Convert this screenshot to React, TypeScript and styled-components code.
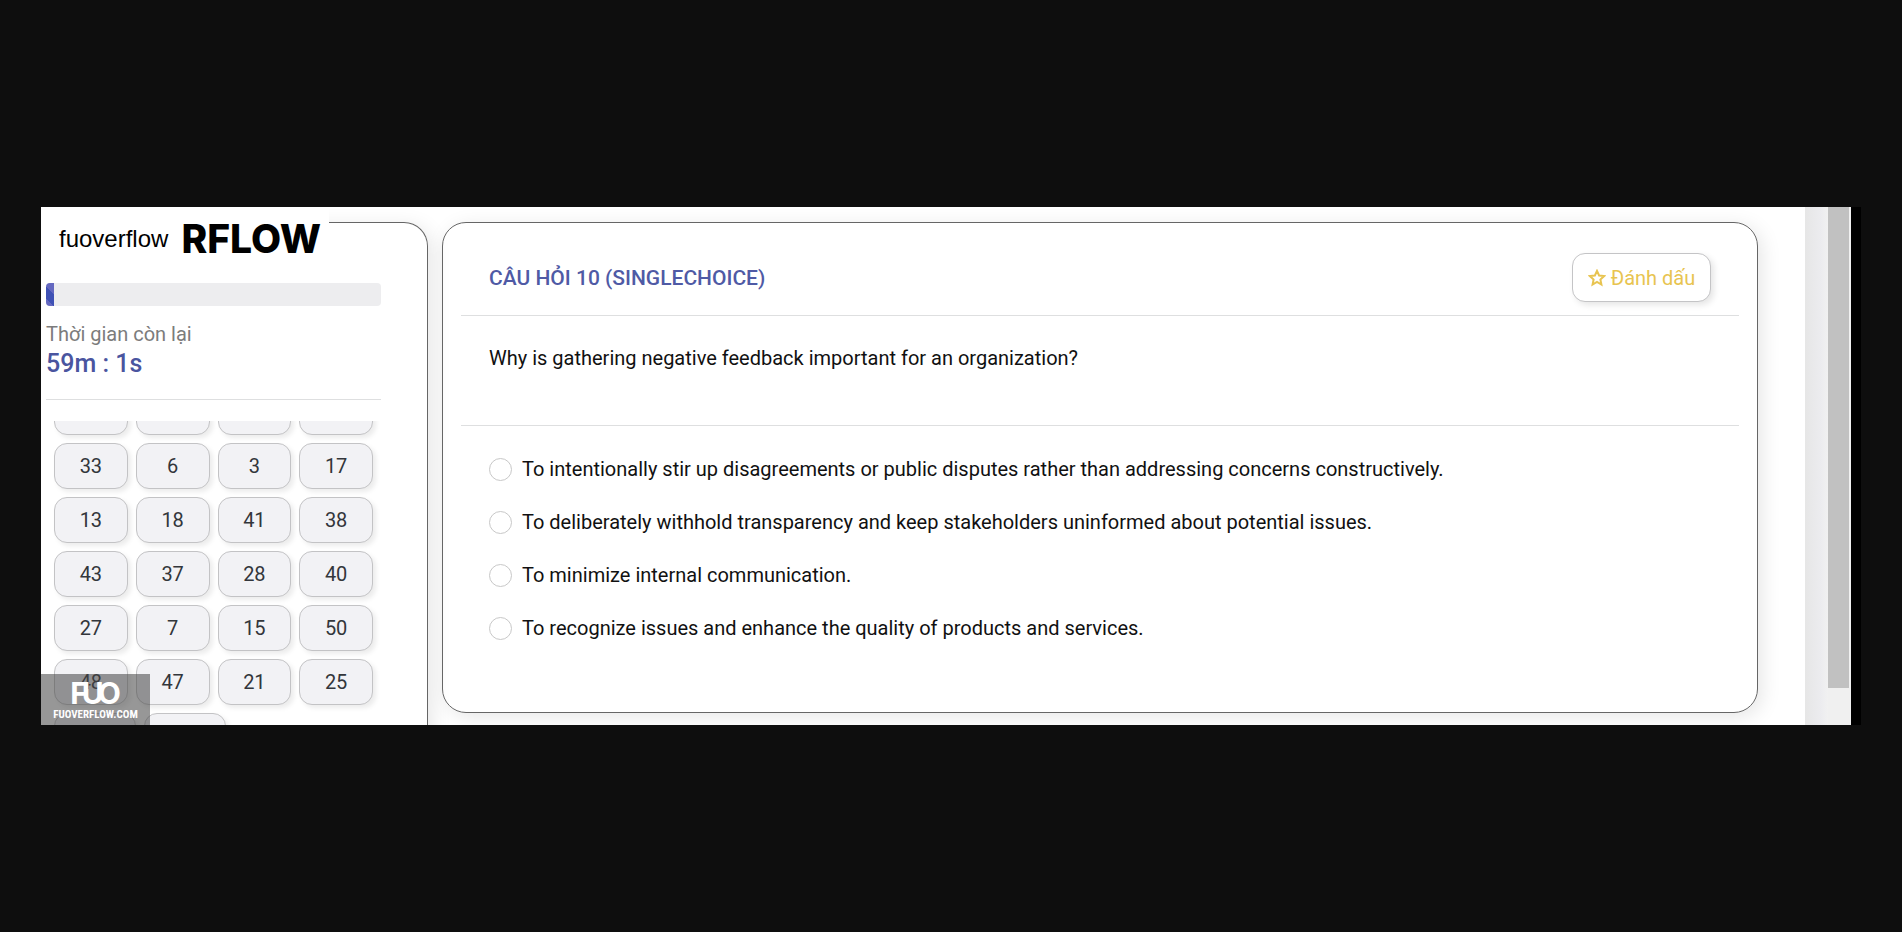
import React, { useState } from "react";
import styled, { createGlobalStyle } from "styled-components";

const GlobalStyle = createGlobalStyle`
  *, *::before, *::after { box-sizing: border-box; }
  body {
    margin: 0;
    background: #0e0e0e;
    font-family: Roboto, "Liberation Sans", sans-serif;
    font-size: 20px;
    color: #111;
  }
  button, input { font: inherit; }
`;

const Page = styled.div`
  display: flex;
  height: 100vh;
  min-height: 700px;
  padding: 207px 41px;
`;

const Frame = styled.div`
  flex: 1;
  min-width: 0;
  display: flex;
  position: relative;
  overflow: hidden;
  background: #fff;
  border-right: 10px solid #000;
`;

const Content = styled.div`
  flex: 1;
  min-width: 0;
  display: flex;
  align-items: flex-start;
  gap: 14px;
  padding: 15px 47px 0 0;
`;

const Sidebar = styled.aside`
  flex: 0 0 387px;
  padding: 60px 46px 0 5px;
  border: 1px solid #666;
  border-left: 0;
  border-bottom: 0;
  border-radius: 0 24px 0 0;
  box-shadow: 4px 4px 20px rgba(0, 0, 0, 0.1);
`;

const Brand = styled.div`
  position: absolute;
  top: 0;
  left: 0;
  display: flex;
  align-items: center;
  gap: 13px;
  width: 288px;
  height: 64px;
  padding-left: 18px;
  background: #fff;
  color: #000;
`;

const BrandName = styled.span`
  font: 24px/28px "Liberation Sans", sans-serif;
`;

const BrandMark = styled.strong`
  font: 800 39px/44px Inter, sans-serif;
`;

const Progress = styled.div`
  height: 23px;
  border-radius: 4px;
  overflow: hidden;
  background: #ededef;
`;

const ProgressFill = styled.div`
  height: 100%;
  background: linear-gradient(45deg, #6468c0 25%, #3f51b5 25%, #3f51b5 62%, #6468c0 62%);
`;

const TimeLabel = styled.div`
  margin-top: 16px;
  line-height: 24px;
  color: #7c7c7c;
`;

const TimeLeft = styled.div`
  font-size: 25px;
  font-weight: 500;
  line-height: 36px;
  color: #4a559f;
`;

const Rule = styled.hr`
  height: 1px;
  margin: 0;
  border: 0;
  background: #dedfe0;
`;

const SidebarRule = styled(Rule)`
  margin-top: 17px;
`;

const NumberList = styled.div`
  display: flex;
  flex-direction: column;
  justify-content: flex-end;
  gap: 8px;
  height: 338px;
  margin-top: 21px;
  padding: 0 8px;
  overflow: hidden;
`;

const NumberRow = styled.div<{ $short?: boolean }>`
  flex: none;
  display: flex;
  gap: 8px;
  width: ${(p) => (p.$short ? "172px" : "auto")};
`;

const NumberButton = styled.button`
  flex: 1;
  height: 46px;
  padding: 0;
  border: 1px solid #c3c3c5;
  border-radius: 13px;
  background: #f2f2f5;
  color: #33363b;
  box-shadow: 3px 3px 5px rgba(0, 0, 0, 0.08);
`;

const Card = styled.main`
  flex: 1;
  min-width: 0;
  padding: 30px 18px 70px;
  border: 1px solid #666;
  border-radius: 24px;
  box-shadow: 4px 4px 20px rgba(0, 0, 0, 0.1);
`;

const CardHeader = styled.header`
  display: flex;
  align-items: center;
  justify-content: space-between;
  padding: 0 28px 13px;
`;

const Title = styled.h1`
  margin: 0;
  font-size: 21px;
  font-weight: 500;
  line-height: 28px;
  color: #4f5aa5;
`;

const MarkButton = styled.button`
  display: flex;
  align-items: center;
  justify-content: center;
  gap: 5px;
  width: 139px;
  height: 49px;
  padding: 0;
  border: 1px solid #c4c4c6;
  border-radius: 13px;
  background: #fff;
  color: #e8c450;
  box-shadow: 3px 3px 6px rgba(0, 0, 0, 0.1);
`;

const Question = styled.p`
  margin: 0;
  padding: 28px 28px 53px;
  line-height: 28px;
`;

const Options = styled.div`
  display: flex;
  flex-direction: column;
  gap: 25px;
  padding: 29px 28px 0;
`;

const Option = styled.label`
  display: flex;
  align-items: center;
  gap: 10px;
  line-height: 28px;
`;

const Radio = styled.input`
  appearance: none;
  flex: none;
  width: 23px;
  height: 23px;
  margin: 0;
  border: 1px solid #c8c8c8;
  border-radius: 50%;
  background: #fff;
  &:checked { border: 7px solid #3f51b5; }
`;

const Gutter = styled.div`
  flex: 0 0 23px;
  background: linear-gradient(90deg, #e6e6e6, #ececef 70%, #f1f1f1);
`;

const ScrollTrack = styled.div`
  flex: 0 0 23px;
  padding: 0 2px 37px 0;
  background: #f0f0f0;
`;

const ScrollThumb = styled.div`
  height: 100%;
  background: #c1c1c1;
`;

const Watermark = styled.div`
  position: absolute;
  left: 0;
  bottom: 0;
  display: flex;
  flex-direction: column;
  align-items: center;
  width: 109px;
  height: 51px;
  padding-top: 4px;
  background: rgba(70, 70, 70, 0.56);
  color: #fff;
`;

const Monogram = styled.div`
  display: flex;
  font: 700 30px/30px Inter, sans-serif;
`;

const MonogramLetter = styled.span`
  & + & { margin-left: -6px; }
`;

const Domain = styled.div`
  font: 700 11px/14px "Liberation Sans Narrow", "Roboto Condensed", sans-serif;
`;

const rows: number[][] = [
  [12, 5, 9, 31],
  [33, 6, 3, 17],
  [13, 18, 41, 38],
  [43, 37, 28, 40],
  [27, 7, 15, 50],
  [48, 47, 21, 25],
  [44, 49],
];

const answers = [
  "To intentionally stir up disagreements or public disputes rather than addressing concerns constructively.",
  "To deliberately withhold transparency and keep stakeholders uninformed about potential issues.",
  "To minimize internal communication.",
  "To recognize issues and enhance the quality of products and services.",
];

const StarIcon = () => (
  <svg width="18" height="18" viewBox="0 0 18 18" fill="none" stroke="currentColor" strokeWidth="2" aria-hidden="true">
    <path d="M9 1.9 11.1 6.5 16.1 7.1 12.4 10.5 13.4 15.5 9 13 4.6 15.5 5.6 10.5 1.9 7.1 6.9 6.5z" />
  </svg>
);

export default function App() {
  const [answer, setAnswer] = useState<number | null>(null);
  const progress = 2.4;
  return (
    <>
      <GlobalStyle />
      <Page>
        <Frame>
          <Content>
            <Sidebar>
              <Progress role="progressbar" aria-label="Thời gian" aria-valuenow={progress}>
                <ProgressFill style={{ width: `${progress}%` }} />
              </Progress>
              <TimeLabel>Thời gian còn lại</TimeLabel>
              <TimeLeft>59m : 1s</TimeLeft>
              <SidebarRule />
              <NumberList>
                {rows.map((row, i) => (
                  <NumberRow key={i} $short={row.length < 4}>
                    {row.map((n) => (
                      <NumberButton key={n} type="button" aria-label={`Câu ${n}`}>
                        {i > 0 && i < rows.length - 1 ? n : null}
                      </NumberButton>
                    ))}
                  </NumberRow>
                ))}
              </NumberList>
            </Sidebar>
            <Card>
              <CardHeader>
                <Title>CÂU HỎI 10 (SINGLECHOICE)</Title>
                <MarkButton type="button">
                  <StarIcon />
                  Đánh dấu
                </MarkButton>
              </CardHeader>
              <Rule />
              <Question>Why is gathering negative feedback important for an organization?</Question>
              <Rule />
              <Options role="radiogroup">
                {answers.map((text, i) => (
                  <Option key={i}>
                    <Radio type="radio" name="answer" checked={answer === i} onChange={() => setAnswer(i)} />
                    {text}
                  </Option>
                ))}
              </Options>
            </Card>
          </Content>
          <Gutter />
          <ScrollTrack>
            <ScrollThumb />
          </ScrollTrack>
          <Brand>
            <BrandName>fuoverflow</BrandName>
            <BrandMark>RFLOW</BrandMark>
          </Brand>
          <Watermark>
            <Monogram>
              <MonogramLetter>F</MonogramLetter>
              <MonogramLetter>U</MonogramLetter>
              <MonogramLetter>O</MonogramLetter>
            </Monogram>
            <Domain>FUOVERFLOW.COM</Domain>
          </Watermark>
        </Frame>
      </Page>
    </>
  );
}
